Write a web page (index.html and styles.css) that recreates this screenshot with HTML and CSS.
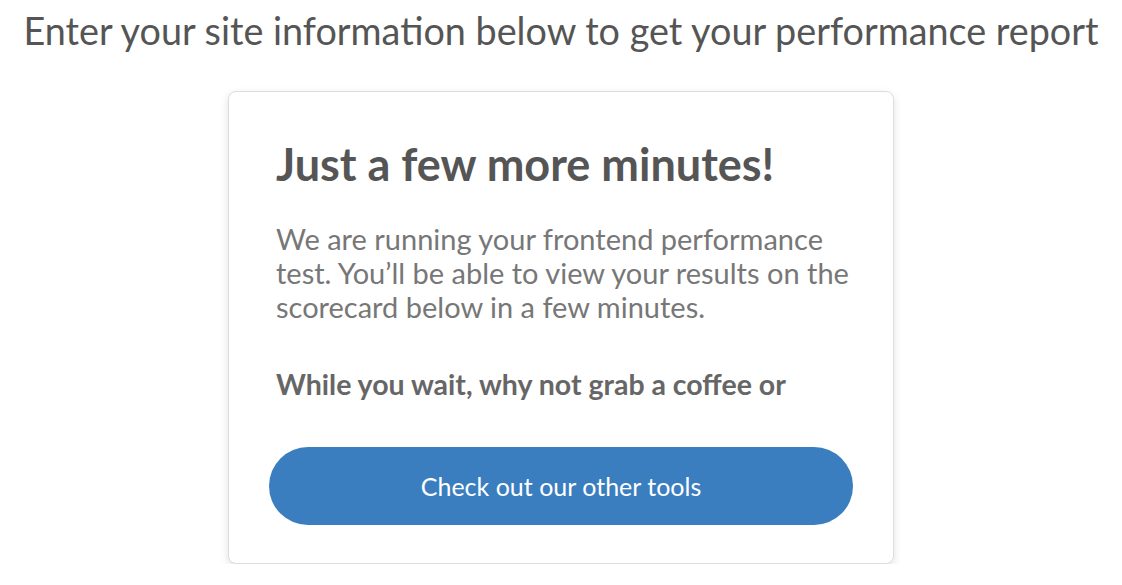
FILE: index.html
```html
<!DOCTYPE html>
<html lang="en">
<head>
    <meta charset="UTF-8">
    <meta name="viewport" content="width=device-width, initial-scale=1.0">
    <title>Performance Report</title>
    <link rel="stylesheet" href="styles.css">
</head>
<body>
    <h2 class="page-intro">Enter your site information below to get your performance report</h2>

    <div class="wait-card">
        <h1 class="wait-title">Just a few more minutes!</h1>
        <p class="wait-text">We are running your frontend performance test. You’ll be able to view your results on the scorecard below in a few minutes.</p>
        <p class="wait-note">While you wait, why not grab a coffee or</p>
        <button class="tools-button">Check out our other tools</button>
    </div>
</body>
</html>
```

FILE: styles.css
```css
body {
    font-family: 'Lato', 'Open Sans', sans-serif;
    margin: 0;
    background-color: #fff;
    color: #555;
    display: flex;
    flex-direction: column;
    align-items: center;
}
.page-intro {
    margin: 9px 0 0;
    font-size: 37.75px;
    font-weight: 400;
    line-height: 44px;
    color: #555;
    white-space: nowrap;
}
.wait-card {
    margin-top: 38px;
    width: 666px;
    box-sizing: border-box;
    padding: 48px 38px 38px 47px;
    border: 1px solid #ddd;
    border-radius: 8px;
    background-color: #fff;
    box-shadow: 0 3px 8px rgba(0, 0, 0, 0.12);
    display: flex;
    flex-direction: column;
}
.wait-title {
    margin: 0;
    font-size: 45px;
    font-weight: 700;
    line-height: 48px;
    color: #555;
}
.wait-text {
    margin: 34px 0 0;
    font-size: 29px;
    line-height: 34px;
    color: #777;
}
.wait-note {
    margin: 43px 0 0;
    font-size: 28.5px;
    font-weight: 700;
    line-height: 34px;
    color: #666;
}
.tools-button {
    margin: 46px 2px 0 -7px;
    height: 78px;
    border: none;
    border-radius: 39px;
    background-color: #3a7ebf;
    color: #fff;
    font-family: inherit;
    font-size: 25px;
    cursor: pointer;
}
```
